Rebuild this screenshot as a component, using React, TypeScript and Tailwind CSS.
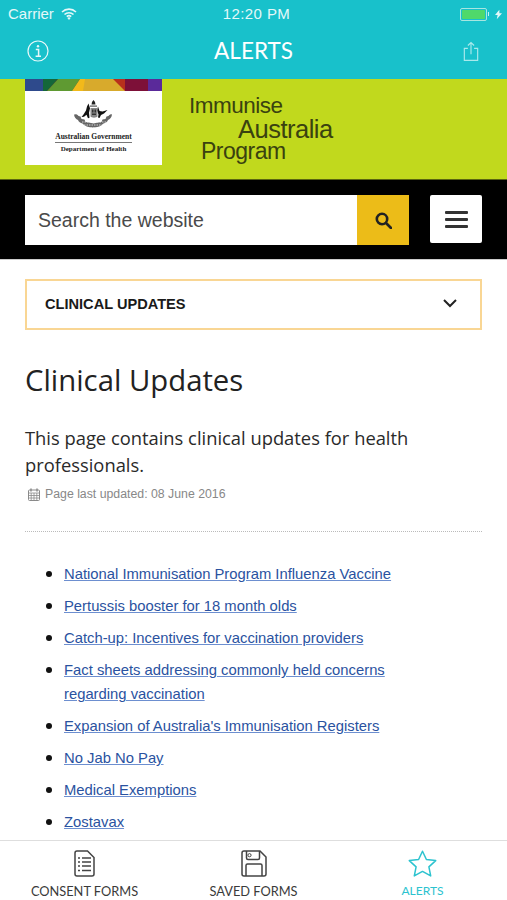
const links = [
  "National Immunisation Program Influenza Vaccine",
  "Pertussis booster for 18 month olds",
  "Catch-up: Incentives for vaccination providers",
  "Fact sheets addressing commonly held concerns regarding vaccination",
  "Expansion of Australia's Immunisation Registers",
  "No Jab No Pay",
  "Medical Exemptions",
  "Zostavax",
];

function Crest() {
  return (
    <svg width="40" height="31" viewBox="0 0 40 31">
      {/* star on top */}
      <path d="M19.500 0l1.500 2 .5 2.500h-4L18 2z" fill="#222" />
      <path d="M16 5.500h7v1.200h-7z" fill="#555" />
      {/* kangaroo */}
      <path d="M14.500 3.500l-1.500 3-1 4-2.500 4-2 2.500 2.500-.3 2.500-2 1.500 3.500 1.500-.5-.5-5 1-4.500z" fill="#111" />
      {/* emu */}
      <path d="M24 6.500l1.500 4.500 3 .5 5-1.500-3.500 3.500-3 1.500-1.500 3-1.500-.5.5-3-1.500-4z" fill="#111" />
      {/* shield */}
      <path d="M16.500 8h7v8.500c-1 1.500-6 1.500-7 0z" fill="#888" />
      <path d="M18 9.500h1.500v3H18zM20.500 9.500H22v3h-1.500zM18 13.500h4v1.500h-4z" fill="#333" />
      {/* wreath */}
      <path d="M1 14.500c1.500-1 3 .5 3.500 1.500l2 .5 1 2.500 3 .5 1 2.500 3.500.5 4.500 1 4.500-1 3.500-.5 1-2.500 3-.5 1-2.500 2-.5c.5-1 2-2.500 3.500-1.500-.3 3-2 4.500-4 5.500-.5 2-2.500 3-4.500 3.500-2 2.500-6 4-10.500 4s-8.500-1.500-10.500-4c-2-.5-4-1.500-4.500-3.500-2-1-3.700-2.500-4-5.500z" fill="#666" />
      <path d="M8 22l24 0M10 25h20M14 28h12" stroke="#fff" strokeWidth="0.7" strokeDasharray="1.500 1" />
    </svg>
  );
}

function Header() {
  return (
    <div className="bg-[#18c1cb] text-white h-[79px] shrink-0 flex flex-col font-['Lato',sans-serif]">
      <div className="h-[27px] flex items-center justify-between relative pl-[8px] pr-[5px] pt-[1px] text-[#e4f8f9] font-['Liberation_Sans',sans-serif]">
        <div className="flex items-center gap-[7px] text-[15px]">
          Carrier
          <svg width="16" height="12" viewBox="0 0 16 12" fill="none" stroke="currentColor" strokeWidth="1.6">
            <path d="M1 4a10 10 0 0 1 14 0M3.500 6.500a6.500 6.500 0 0 1 9 0M5.800 8.700a3.200 3.200 0 0 1 4.400 0" />
            <path d="M8 12l-1.600-2a2 2 0 0 1 3.200 0z" fill="currentColor" stroke="none" />
          </svg>
        </div>
        <div className="absolute left-[6px] right-0 text-center text-[15px] tracking-[0.4px] font-medium">12:20 PM</div>
        <div className="flex items-center gap-[3px]">
          <div className="w-[27px] h-[13px] rounded-[2px] border border-[#a8e6e0] p-[1px]">
            <div className="w-full h-full rounded-[1px] bg-[#4fd96a]" />
          </div>
          <div className="w-[1px] h-[4px] bg-[#c8f0f0] -ml-[2px]" />
          <svg width="7" height="11" viewBox="0 0 8 11" className="ml-[3px]">
            <path d="M5 0L0 6h3l-1 5 6-7H5z" fill="currentColor" />
          </svg>
        </div>
      </div>
      <div className="flex-1 flex items-center justify-between pl-[27px] pr-[28px] pb-[4px]">
        <svg width="22" height="22" viewBox="0 0 22 22" fill="none" stroke="currentColor" strokeWidth="1.2" className="opacity-90">
          <circle cx="11" cy="11" r="10" />
          <circle cx="11" cy="6.300" r="1.200" fill="currentColor" stroke="none" />
          <path d="M8.800 9.400H11.600V16M8.600 16.200h5.400" strokeWidth="1.500" />
        </svg>
        <div className="text-[22.500px] font-normal leading-none -ml-[5px]">ALERTS</div>
        <svg width="16" height="21" viewBox="0 0 18 22" fill="none" stroke="#a9e9ec" strokeWidth="1.300" className="mt-[1px]">
          <path d="M5.500 7.500H1.500v13.500h15V7.500h-4M9 14V1M5.500 4.200L9 .9l3.500 3.300" />
        </svg>
      </div>
    </div>
  );
}

function Banner() {
  return (
    <div className="bg-[#c1d91d] h-[101px] shrink-0 flex items-start pl-[25px] border-b border-[#5a6510]">
      <div className="w-[137px] h-[86px] bg-white flex flex-col items-center shrink-0">
        <svg width="137" height="12" viewBox="0 0 137 12" className="block" preserveAspectRatio="none">
          <rect width="137" height="12" fill="#5a2a9a" />
          <rect width="123" height="12" fill="#7d1038" />
          <rect width="100" height="12" fill="#b8301c" />
          <polygon points="55,0 88,0 100,12 47,12" fill="#d8aa2c" />
          <polygon points="55,0 60,0 58,12 47,12" fill="#f2b91a" />
          <polygon points="33,0 55,0 47,12 22,12" fill="#5f9a32" />
          <polygon points="18,0 33,0 22,12 18,12" fill="#14673a" />
          <rect width="18" height="12" fill="#2e4a8c" />
        </svg>
        <div className="mt-[9px]">
          <Crest />
        </div>
        <div className="mt-[1px] text-[7.500px] font-bold leading-[9px] text-[#222] font-['Liberation_Serif',serif] whitespace-nowrap pb-[1px] border-b border-[#777]">
          Australian Government
        </div>
        <div className="text-[7px] font-bold leading-[10px] text-[#222] font-['Liberation_Serif',serif] whitespace-nowrap mt-[1px]">
          Department of Health
        </div>
      </div>
      <div className="flex-1 font-['Liberation_Sans',sans-serif] text-[#3a4210] tracking-[-0.5px] leading-none">
        <div className="pl-[27px] pt-[16px] text-[22.500px]">Immunise</div>
        <div className="pl-[76px] -mt-[1px] text-[25.500px]">Australia</div>
        <div className="pl-[39px] text-[23px] -mt-[2px]">Program</div>
      </div>
    </div>
  );
}

function SearchBar() {
  return (
    <div className="bg-black h-[80px] shrink-0 flex items-start pt-[15px] pl-[25px] pr-[25px] justify-between border-b border-[#ccc]">
      <div className="w-[384px] h-[50px] bg-white flex items-center justify-between">
        <span className="pl-[13px] pt-[1px] text-[19.500px] text-[#4a4a4a] font-['Liberation_Sans',sans-serif]">Search the website</span>
        <div className="w-[52px] h-full bg-[#ecbc18] flex items-center justify-center">
          <svg width="17" height="17" viewBox="0 0 17 17" fill="none" stroke="#222" strokeWidth="2.600">
            <circle cx="7" cy="7" r="5.200" />
            <path d="M11 11l5 5" strokeLinecap="round" />
          </svg>
        </div>
      </div>
      <div className="w-[52px] h-[48px] bg-white rounded-[2px] flex flex-col items-center justify-center gap-[4px]">
        <div className="w-[23px] h-[3px] rounded-[1px] bg-[#333]" />
        <div className="w-[23px] h-[3px] rounded-[1px] bg-[#333]" />
        <div className="w-[23px] h-[3px] rounded-[1px] bg-[#333]" />
      </div>
    </div>
  );
}

function TabBar() {
  return (
    <div className="h-[60px] shrink-0 bg-white border-t border-[#dedede] grid grid-cols-3 font-['Lato',sans-serif] text-[12.800px] leading-none text-[#3a3a3a]">
      <div className="flex flex-col items-center pt-[9px] gap-[8px]">
        <svg width="21" height="27" viewBox="0 0 21 27" fill="none" stroke="#444" strokeWidth="1.500">
          <path d="M3 1h10.500L20 7.500V24a2 2 0 0 1-2 2H3a2 2 0 0 1-2-2V3a2 2 0 0 1 2-2z" />
          <path d="M8 8h9M8 12h9M8 16h9M8 20.500h9" strokeWidth="1.700" />
          <path d="M4 8h2M4 12h2M4 16h2M4 20.500h2" strokeWidth="1.500" />
        </svg>
        <span>CONSENT FORMS</span>
      </div>
      <div className="flex flex-col items-center pt-[9px] gap-[8px]">
        <svg width="26" height="27" viewBox="0 0 26 27" fill="none" stroke="#444" strokeWidth="1.500">
          <path d="M3 1h16l6 6v17a2 2 0 0 1-2 2H3a2 2 0 0 1-2-2V3a2 2 0 0 1 2-2z" />
          <path d="M5.500 1v7a1.500 1.500 0 0 0 1.500 1.500h10a1.500 1.500 0 0 0 1.500-1.500V1" />
          <circle cx="8.500" cy="5.200" r="1.600" strokeWidth="1" />
          <path d="M5 26V15.500A1.500 1.500 0 0 1 6.500 14h13a1.500 1.500 0 0 1 1.500 1.500V26" />
        </svg>
        <span>SAVED FORMS</span>
      </div>
      <div className="flex flex-col items-center pt-[9px] gap-[8px] text-[#2cc3cf] text-[12px]">
        <svg width="29" height="27" viewBox="0 0 29 27" fill="none" stroke="#2cc3cf" strokeWidth="1.500" strokeLinejoin="round">
          <path d="M14.500 1.200l3.900 8.300 9.300 1.100-6.800 6.300 1.800 9-8.200-4.500-8.200 4.500 1.800-9-6.800-6.300 9.300-1.100z" />
        </svg>
        <span>ALERTS</span>
      </div>
    </div>
  );
}

export default function App() {
  return (
    <div className="w-[507px] h-[900px] overflow-hidden bg-white flex flex-col">
      <Header />
      <Banner />
      <SearchBar />
      <main className="flex-1 overflow-hidden px-[25px] pt-[19px]">
        <div className="h-[51px] border-2 border-[#f9d694] flex items-center justify-between pl-[18px] pr-[23px] font-['Liberation_Sans',sans-serif]">
          <span className="text-[14.600px] font-bold text-[#1a1a1a]">CLINICAL UPDATES</span>
          <svg width="14" height="9" viewBox="0 0 14 9" fill="none" stroke="#222" strokeWidth="2" className="-mt-[3px]">
            <path d="M1 1l6 6 6-6" />
          </svg>
        </div>
        <h1 className="mt-[29px] text-[29.300px] leading-[42px] text-[#222] font-['Open_Sans',sans-serif]">Clinical Updates</h1>
        <p className="mt-[23px] text-[18.350px] leading-[27px] text-[#2a2a2a] font-['Open_Sans',sans-serif]">
          This page contains clinical updates for health professionals.
        </p>
        <div className="mt-[7px] flex items-center gap-[5px] pl-[3px] text-[12.300px] text-[#888] font-['Liberation_Sans',sans-serif]">
          <svg width="12" height="13" viewBox="0 0 12 13" fill="none" stroke="#8a8a8a" strokeWidth="1">
            <rect x="0.500" y="2" width="11" height="10.500" rx="1" />
            <path d="M0.500 5h11M0.500 7.500h11M0.500 10h11M3.200 5v7.500M6 5v7.500M8.800 5v7.500" strokeWidth="0.800" />
            <path d="M3 0.500v3M9 0.500v3" strokeWidth="1.500" />
          </svg>
          Page last updated: 08 June 2016
        </div>
        <div className="mt-[28px] border-t border-dotted border-[#bbb]" />
        <ul className="mt-[30px] pl-[21px] pr-[50px] font-['Liberation_Sans',sans-serif] text-[14.800px] leading-[24px] text-[#2a52a0]">
          {links.map((link) => (
            <li key={link} className="mb-[8px] flex">
              <span className="shrink-0 mt-[9px] mr-[12px] w-[6px] h-[6px] rounded-full bg-[#111]" />
              <a className="underline decoration-[#6d8fd0]">{link}</a>
            </li>
          ))}
        </ul>
      </main>
      <TabBar />
    </div>
  );
}
